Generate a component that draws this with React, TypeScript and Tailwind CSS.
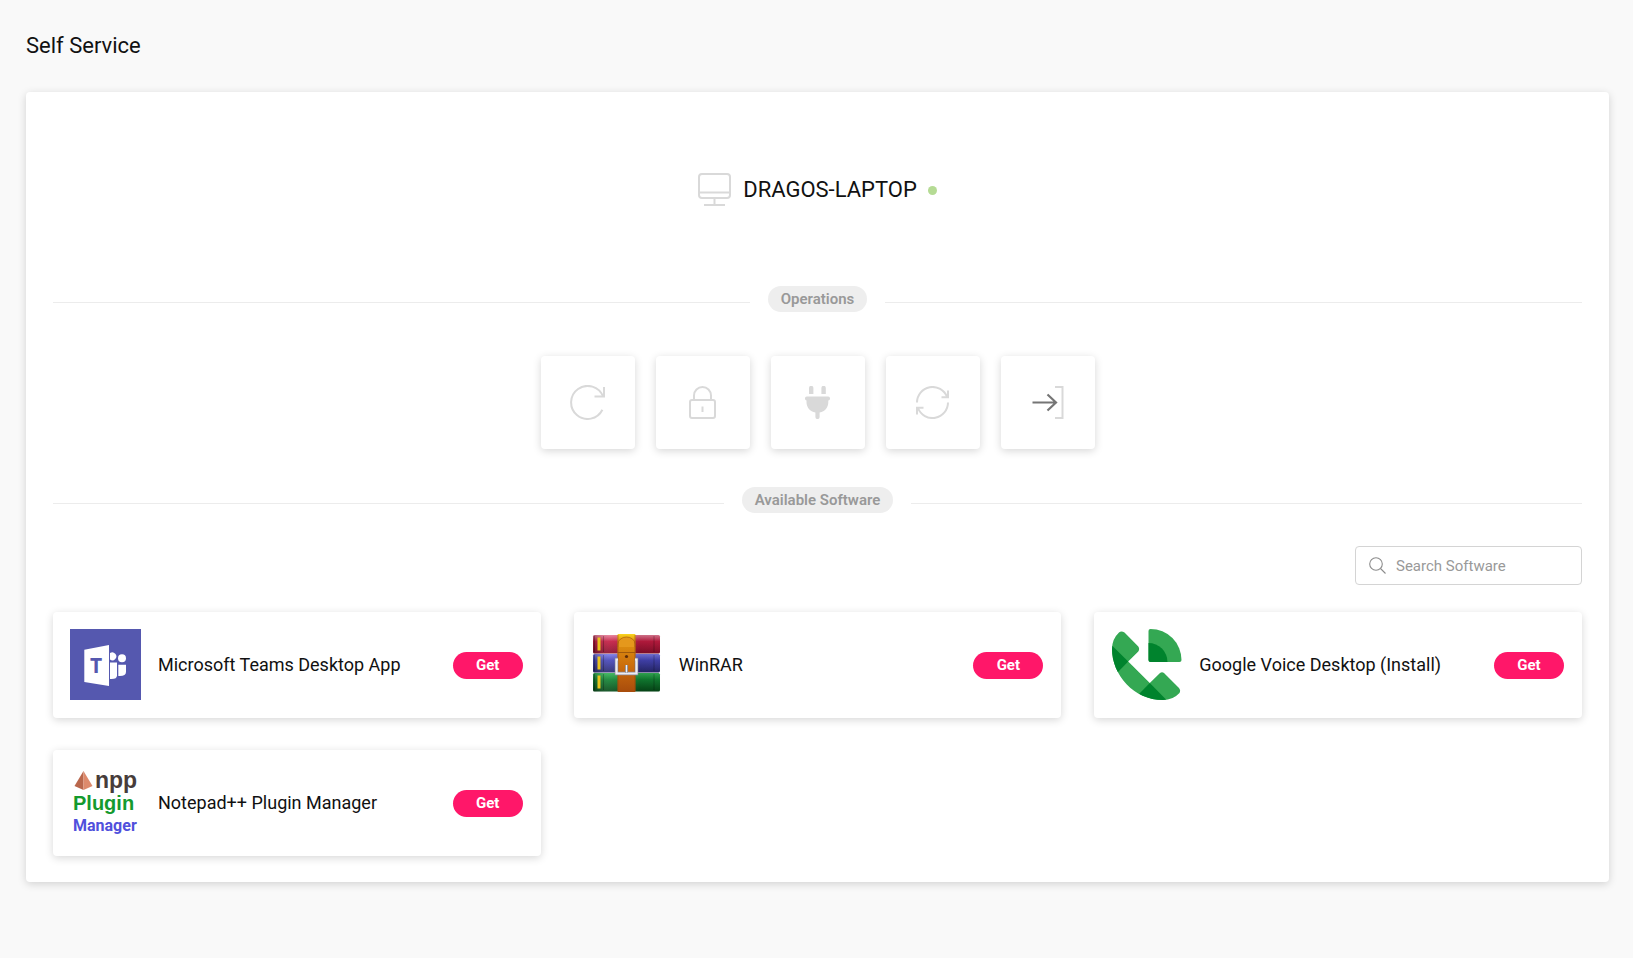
import type { ReactNode } from "react";

type SoftwareItem = {
  name: string;
  logo: ReactNode;
};

type Operation = {
  label: string;
  icon: ReactNode;
};

function MonitorIcon() {
  return (
    <svg width="33" height="34" viewBox="0 0 33 34" fill="none" stroke="#d9d9d9" strokeWidth="2">
      <rect x="1" y="1" width="31" height="24" rx="3" />
      <path d="M1 19.5H32M16.5 25V32M6 32H27" />
    </svg>
  );
}

function RestartIcon() {
  return (
    <svg width="35" height="35" viewBox="0 0 35 35" fill="none" stroke="#d9d9d9" strokeWidth="2">
      <path d="M32.4 24.8A16.5 16.5 0 1 1 33 11.5" />
      <path d="M34 2V11.5H24.5" />
    </svg>
  );
}

function LockIcon() {
  return (
    <svg width="27" height="33" viewBox="0 0 27 33" fill="none" stroke="#d9d9d9" strokeWidth="2">
      <rect x="1" y="14" width="25" height="18" rx="2" />
      <path d="M5 14V9.5a8.5 8.5 0 0 1 17 0V14M13.5 20.5V26" />
    </svg>
  );
}

function PlugIcon() {
  return (
    <svg width="25" height="33" viewBox="0 0 25 33" fill="#d9d9d9">
      <path d="M4 8V2a2.2 2.2 0 0 1 4.4 0V8zM16.4 8V2a2.2 2.2 0 0 1 4.4 0V8z" />
      <rect y="10.5" width="25" height="4" rx="1.8" />
      <path d="M1.5 13H23.3V16C23.3 21.5 20 25.5 14.6 26.6V31a2.1 2.1 0 0 1-4.2 0V26.6C5 25.5 1.5 21.5 1.5 16z" />
    </svg>
  );
}

function SyncIcon() {
  return (
    <svg width="33" height="33" viewBox="0 0 33 33" fill="none" stroke="#d9d9d9" strokeWidth="2">
      <path d="M1 16.5A15.5 15.5 0 0 1 31 11" />
      <path d="M32 4.5V11.2H25.5" />
      <path d="M32 16.5A15.5 15.5 0 0 1 2 22" />
      <path d="M1 28.5V21.8H7.5" />
    </svg>
  );
}

function LogonIcon() {
  return (
    <svg width="32" height="33" viewBox="0 0 32 33" fill="none">
      <path d="M23 1H30.5V32H23" stroke="#d9d9d9" strokeWidth="2" />
      <path d="M.5 16.5H24M15.5 8.5L24 16.5L15.5 24.5" stroke="#757575" strokeWidth="2.2" />
    </svg>
  );
}

function SearchIcon() {
  return (
    <svg width="17" height="17" viewBox="0 0 17 17" fill="none" stroke="#8c8c8c" strokeWidth="1.1">
      <circle cx="7" cy="7" r="6.3" />
      <path d="M11.5 11.5L16.5 16.5" />
    </svg>
  );
}

function TeamsLogo() {
  return (
    <svg width="71" height="71" viewBox="0 0 71 71">
      <rect width="71" height="71" fill="#5558af" />
      <g fill="#fff">
        <path d="M14.3 20.7L39 16V57L14.3 53z" />
        <path d="M40 24a4 4 0 1 1 0 6.6z" />
        <circle cx="52" cy="29.3" r="4" />
        <path d="M40 33.5H47V46.5Q47 50.5 40 50z" />
        <path d="M48.3 35.7H56V43Q56 47.5 48.3 47z" />
      </g>
      <text x="26" y="44" textAnchor="middle" fill="#5558af" className="font-['Open_Sans'] text-[21px] font-bold">
        T
      </text>
    </svg>
  );
}

const books = [
  { y: 6, from: "#e8809a", mid: "#c41c42", to: "#8a0f2c" },
  { y: 25, from: "#7d7de8", mid: "#4646b8", to: "#28286e" },
  { y: 44, from: "#35b558", mid: "#128434", to: "#064a18" },
];

function WinRarLogo() {
  return (
    <svg width="71" height="71" viewBox="-2 0 71 71">
      <defs>
        {books.map((book, i) => (
          <linearGradient key={i} id={`book-${i}`} x1="0" y1="0" x2="0" y2="1">
            <stop offset="0" stopColor={book.from} />
            <stop offset="0.35" stopColor={book.mid} />
            <stop offset="1" stopColor={book.to} />
          </linearGradient>
        ))}
        <linearGradient id="belt" x1="0" y1="0" x2="0" y2="1">
          <stop offset="0" stopColor="#f9d61e" />
          <stop offset="0.12" stopColor="#e0930f" />
          <stop offset="0.6" stopColor="#c8690d" />
          <stop offset="1" stopColor="#a84c0c" />
        </linearGradient>
        <linearGradient id="shade" x1="0" y1="0" x2="1" y2="0">
          <stop offset="0" stopColor="#000" stopOpacity="0.25" />
          <stop offset="0.25" stopColor="#fff" stopOpacity="0.08" />
          <stop offset="0.7" stopColor="#000" stopOpacity="0.12" />
          <stop offset="1" stopColor="#000" stopOpacity="0.1" />
        </linearGradient>
      </defs>
      {books.map((book, i) => (
        <g key={i}>
          <rect y={book.y} width="67" height="18.5" rx="1.5" fill={`url(#book-${i})`} />
          <rect y={book.y} width="67" height="18.5" rx="1.5" fill="url(#shade)" />
          <rect x="4.5" y={book.y + 2.5} width="3" height="13" fill="#eac41c" />
          <path d={`M1.5 ${book.y + 1}v16M10.5 ${book.y + 1}v16M61 ${book.y + 1}v16`} stroke="#000" strokeOpacity="0.25" />
        </g>
      ))}
      <rect x="24.5" y="5" width="18" height="58" rx="1" fill="url(#belt)" />
      <path d="M25 18V15a8.5 7 0 0 1 17 0v3" fill="#e5981c" stroke="#a8600c" strokeWidth="0.7" />
      <path d="M25 6v56M42 6v56" stroke="#8a430a" strokeOpacity="0.5" />
      <path d="M25 23.5H42" stroke="#a05a0c" />
      <circle cx="33.5" cy="27.5" r="1.6" fill="#5e2c08" />
      <path d="M25 30.5H23.5V44.5H43.5V30.5H42" fill="none" stroke="#8d8d9c" strokeWidth="3.4" />
      <path d="M25 30.5H23.5V44.5H43.5V30.5H42" fill="none" stroke="#ececf2" strokeWidth="2.2" />
      <path d="M33.5 36V43.5" stroke="#6f6f78" strokeWidth="3" />
      <path d="M33.5 36V43.5" stroke="#f0f0f4" strokeWidth="1.6" />
    </svg>
  );
}

function GoogleVoiceLogo() {
  return (
    <svg width="71" height="71" viewBox="-1 0 71 71">
      <defs>
        <clipPath id="handset">
          <path d="M7 3.5Q9.3 1.5 12.500 3.5L26.300 17.5Q28 20 26.300 22.500L16.200 32.5L37.800 54L48 44Q50 42.500 52 44L67 59Q69 61.500 67.500 64Q61 71 51 71C22 71 0 46 0 20Q0 10 7 3.5z" />
        </clipPath>
        <clipPath id="quarter">
          <path d="M38.500 0A31 31 0 0 1 69.500 31Q69.500 33 67.500 33H38.500Q36.500 33 36.500 31V2Q36.500 0 38.500 0z" />
        </clipPath>
      </defs>
      <g clipPath="url(#handset)">
        <rect width="71" height="71" fill="#34a853" />
        <path d="M-2 14.500L16.200 32.500L5.500 43.500L-3 43z" fill="#00832d" />
        <path d="M27 65L37.800 54L55 71.500L39 75z" fill="#00832d" />
      </g>
      <g clipPath="url(#quarter)">
        <rect x="36" width="34" height="33" fill="#34a853" />
        <circle cx="36.500" cy="33" r="19" fill="#00832d" />
      </g>
    </svg>
  );
}

function PluginManagerLogo() {
  return (
    <svg width="71" height="71" viewBox="0 0 71 71">
      <path d="M13.5 4L4.5 19L13.5 23z" fill="#b9674c" />
      <path d="M13.5 4L22.5 19L13.5 23z" fill="#dd8a6c" />
      <text x="25" y="21" fill="#473c3a" className="font-['Liberation_Sans',sans-serif] text-[23px] font-bold">npp</text>
      <text x="3" y="43" fill="#149a2e" className="font-['Liberation_Sans',sans-serif] text-[20px] font-bold">Plugin</text>
      <text x="3" y="64" fill="#5050dc" className="font-[Roboto,sans-serif] text-[16px] font-bold">Manager</text>
    </svg>
  );
}

const operations: Operation[] = [
  { label: "Restart", icon: <RestartIcon /> },
  { label: "Lock", icon: <LockIcon /> },
  { label: "Power", icon: <PlugIcon /> },
  { label: "Sync", icon: <SyncIcon /> },
  { label: "Log on", icon: <LogonIcon /> },
];

const software: SoftwareItem[] = [
  { name: "Microsoft Teams Desktop App", logo: <TeamsLogo /> },
  { name: "WinRAR", logo: <WinRarLogo /> },
  { name: "Google Voice Desktop (Install)", logo: <GoogleVoiceLogo /> },
  { name: "Notepad++ Plugin Manager", logo: <PluginManagerLogo /> },
];

function SectionDivider({ title }: { title: string }) {
  return (
    <div className="flex items-center gap-[18px]">
      <div className="mt-[6px] h-px flex-1 bg-[#ececec]" />
      <h2 className="rounded-full bg-[#eeeeee] px-[13px] text-[15px] leading-[26px] font-semibold text-[#999999]">
        {title}
      </h2>
      <div className="mt-[6px] h-px flex-1 bg-[#ececec]" />
    </div>
  );
}

function SoftwareCard({ name, logo }: SoftwareItem) {
  return (
    <li className="flex items-center rounded bg-white pt-[17px] pr-[18px] pb-[18px] pl-[17px] shadow-[0_2px_8px_rgba(0,0,0,0.16)]">
      <div className="shrink-0">{logo}</div>
      <h3 className="ml-[17px] flex-1 text-[18px] leading-6 text-[#111111]">{name}</h3>
      <button className="mt-[2px] h-[27px] w-[70px] rounded-full bg-[#ff1769] text-[15px] font-bold text-white">
        Get
      </button>
    </li>
  );
}

export default function App() {
  return (
    <div className="min-h-screen bg-[#f9f9f9] pr-6 pb-6 pl-[26px] font-[Roboto,sans-serif] text-[#111111]">
      <h1 className="pt-[30px] pb-[30px] text-[22px] leading-8">Self Service</h1>

      <main className="rounded bg-white px-[27px] pt-[81px] pb-[26px] shadow-[0_2px_8px_rgba(0,0,0,0.16)]">
        <div className="mb-[79px] flex items-center justify-center">
          <MonitorIcon />
          <span className="ml-3 text-[22px] leading-8">DRAGOS-LAPTOP</span>
          <span className="ml-[11px] size-[9px] rounded-full bg-[#b5db94]" />
        </div>

        <SectionDivider title="Operations" />

        <div className="mt-[44px] mb-[38px] flex justify-center gap-[21px]">
          {operations.map((operation) => (
            <button
              key={operation.label}
              aria-label={operation.label}
              className="flex h-[93px] w-[94px] items-center justify-center rounded bg-white shadow-[0_2px_8px_rgba(0,0,0,0.16)]"
            >
              {operation.icon}
            </button>
          ))}
        </div>

        <SectionDivider title="Available Software" />

        <div className="mt-[33px] mb-[27px] flex justify-end">
          <label className="flex h-[39px] w-[227px] items-center gap-[10px] rounded border border-[#d4d4d4] px-[13px]">
            <SearchIcon />
            <input
              type="text"
              aria-label="Search Software"
              placeholder="Search Software"
              className="min-w-0 flex-1 pt-px text-[15px] outline-none placeholder:text-[#999999]"
            />
          </label>
        </div>

        <ul className="grid grid-cols-3 gap-x-[33px] gap-y-8">
          {software.map((item) => (
            <SoftwareCard key={item.name} name={item.name} logo={item.logo} />
          ))}
        </ul>
      </main>
    </div>
  );
}
